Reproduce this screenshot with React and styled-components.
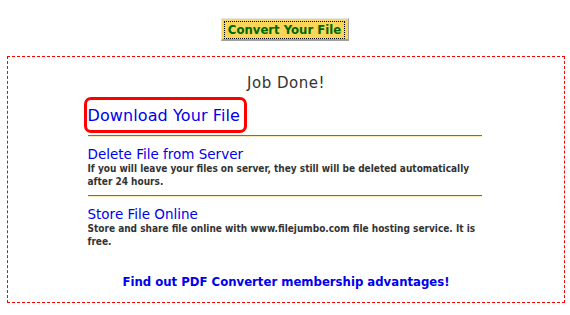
import React from "react";
import styled, { createGlobalStyle } from "styled-components";

const GlobalStyle = createGlobalStyle`
  body {
    margin: 0;
    background: #fff;
    font-family: "DejaVu Sans", Verdana, sans-serif;
  }
`;

const Page = styled.div`
  width: 570px;
  padding-top: 18px;
`;

const ButtonRow = styled.div`
  display: flex;
  justify-content: center;
`;

const ConvertButton = styled.button`
  width: 128px;
  height: 23px;
  padding: 2px 3px 2px 2px;
  background: #f7d65a;
  border-top: 1px solid #e6e6e6;
  border-left: 1px solid #e6e6e6;
  border-right: 1px solid #a0a0a0;
  border-bottom: 2px solid #a0a0a0;
  font-family: "DejaVu Sans Condensed", "DejaVu Sans", sans-serif;
  font-stretch: condensed;
  font-size: 13px;
  font-weight: bold;
  color: #006600;
  cursor: pointer;

  span {
    display: block;
    height: 100%;
    border: 1px dotted #000;
    line-height: 15px;
  }
`;

const ResultBox = styled.div`
  margin: 15px 5px 0 7px;
  padding-bottom: 12px;
  border: 1px dashed #ff0000;
  display: flex;
  flex-direction: column;
  align-items: center;
`;

const Title = styled.div`
  margin-top: 17px;
  font-size: 15px;
  letter-spacing: 0.5px;
  color: #333;
  line-height: 18px;
`;

const Column = styled.div`
  width: 394px;
  margin: 5px 3px 0 0;
`;

const Action = styled.a`
  display: block;
  color: #0000ee;
  text-decoration: none;
  font-size: ${({ $big }) => ($big ? "16px" : "13.5px")};
  letter-spacing: ${({ $big }) => ($big ? "0.1px" : "0")};
  line-height: ${({ $big }) => ($big ? "18px" : "16px")};
`;

const Highlight = styled.div`
  display: inline-block;
  margin-left: -4px;
  padding: 7px 4px 5px 1px;
  border: 3px solid #ff0000;
  border-radius: 7px;
`;

const Note = styled.div`
  font-family: "DejaVu Sans Condensed", "DejaVu Sans", sans-serif;
  font-stretch: condensed;
  font-size: 10px;
  font-weight: bold;
  color: #333;
  line-height: 13px;
`;

const Rule = styled.div`
  height: 1px;
  background: #8b6d2c;
  border-bottom: 1px solid #fbe9b8;
  margin: ${({ $top }) => $top || "7px"} 0 ${({ $bottom }) => $bottom || "9px"};
`;

const Footer = styled.a`
  margin-top: 26px;
  font-family: "DejaVu Sans Condensed", "DejaVu Sans", sans-serif;
  font-stretch: condensed;
  font-size: 13px;
  font-weight: bold;
  color: #0000ee;
  text-decoration: none;
  line-height: 16px;
`;

export default function App() {
  return (
    <>
      <GlobalStyle />
      <Page>
        <ButtonRow>
          <ConvertButton>
            <span>Convert Your File</span>
          </ConvertButton>
        </ButtonRow>
        <ResultBox>
          <Title>Job Done!</Title>
          <Column>
            <Highlight>
              <Action href="#" $big>Download Your File</Action>
            </Highlight>
            <Rule $top="2px" $bottom="9px" />
            <Action href="#">Delete File from Server</Action>
            <Note>
              If you will leave your files on server, they still will be deleted
              automatically after 24 hours.
            </Note>
            <Rule />
            <Action href="#">Store File Online</Action>
            <Note>
              Store and share file online with www.filejumbo.com file hosting
              service. It is free.
            </Note>
          </Column>
          <Footer href="#">Find out PDF Converter membership advantages!</Footer>
        </ResultBox>
      </Page>
    </>
  );
}
